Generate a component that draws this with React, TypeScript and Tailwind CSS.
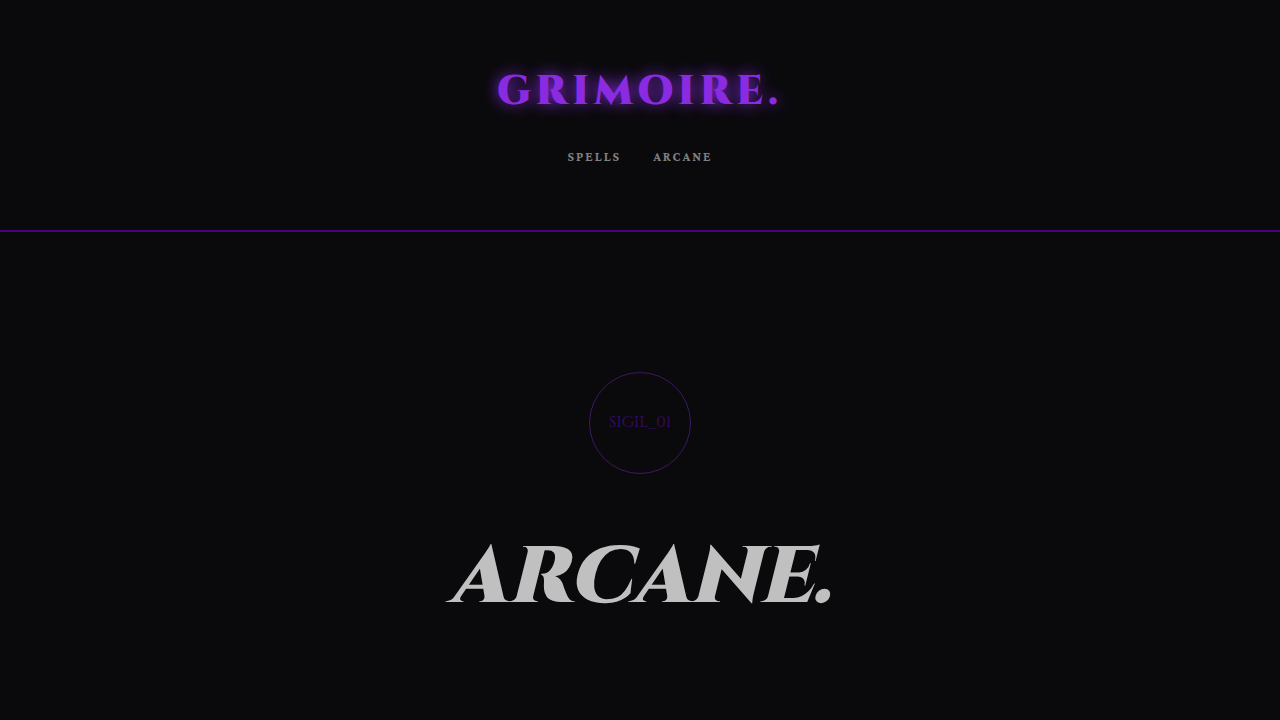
export default function App() {
  return (
    <div className="min-h-screen bg-[#0a0a0c] font-['Cinzel','Liberation_Serif',serif] text-[#c0c0c0]">
      <header className="flex flex-col items-center gap-6 border-b-2 border-[#4b0082] px-6 pt-[60px] pb-16">
        <div className="text-[40px] leading-[64px] font-black tracking-[5px] text-[#8a2be2] [text-shadow:0_0_15px_#8a2be2]">
          GRIMOIRE.
        </div>
        <nav className="flex gap-8 font-['Crimson_Pro','Liberation_Serif',serif] text-[13px] leading-[18px] font-bold tracking-[2px] text-[#808080]">
          <a href="#spells">SPELLS</a>
          <a href="#arcane">ARCANE</a>
        </nav>
      </header>
      <main id="arcane" className="flex flex-col items-center px-6 pt-[140px] pb-16">
        <div className="flex size-[102px] items-center justify-center rounded-full border border-[#8a2be2]/40 pb-0.5 text-base text-[#3c0b72]">
          SIGIL_01
        </div>
        <h1 className="mt-[60px] text-[80px] leading-[88px] font-black italic">ARCANE.</h1>
      </main>
    </div>
  );
}
